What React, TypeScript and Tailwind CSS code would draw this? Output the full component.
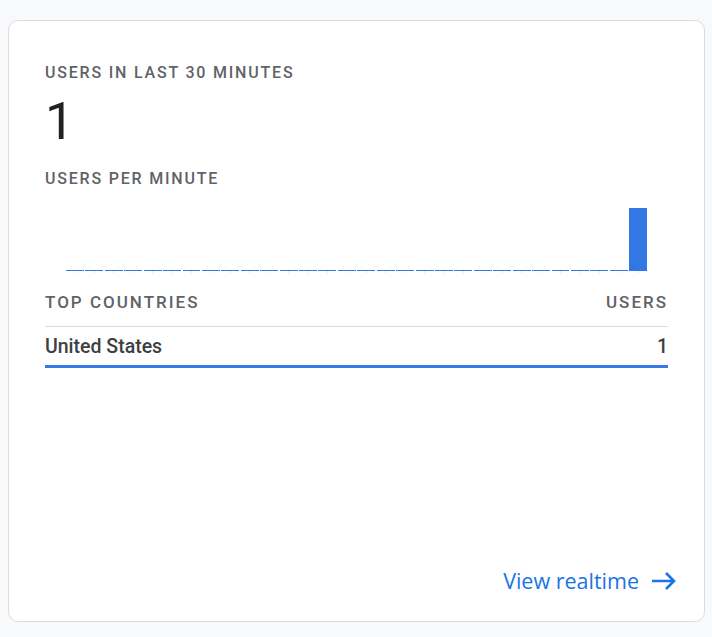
import React from 'react';

// 30 one-minute buckets, only the latest has a user
const PER_MINUTE: number[] = Array.from({ length: 30 }, (_, i) => (i === 29 ? 1 : 0));

const COUNTRIES = [{ name: 'United States', users: 1 }];

function ArrowIcon() {
  return (
    <svg width="26" height="20" viewBox="0 0 26 20" fill="none" className="block">
      <path d="M1 10h22M15 2l8 8-8 8" stroke="#1a73e8" strokeWidth="2.6" strokeLinecap="butt" strokeLinejoin="miter" />
    </svg>
  );
}

export default function App() {
  const max = Math.max(...PER_MINUTE, 1);

  return (
    <div className="min-h-[637px] bg-[#f8f9fa] pt-5 pb-[15px] pl-2 pr-[7px] font-['Roboto',sans-serif]">
      <div className="flex h-[602px] flex-col rounded-[10px] border border-[#dadce0] bg-white px-9 pt-10">
        {/* Headline number */}
        <div className="text-[16px] font-medium leading-6 tracking-[1.8px] text-[#5f6368]">USERS IN LAST 30 MINUTES</div>
        <div className="mt-[11px] text-[52px] leading-none text-[#202124]">1</div>

        {/* Per minute chart */}
        <div className="mt-[19px] text-[16px] font-medium leading-6 tracking-[1.8px] text-[#5f6368]">USERS PER MINUTE</div>
        <div className="flex h-[80px] items-end gap-[1.5px] px-[21px]">
          {PER_MINUTE.map((v, i) => (
            <div
              key={i}
              className="flex-1 bg-[#3277e3]"
              style={{ height: v > 0 ? `${(v / max) * 63}px` : '1px' }}
            />
          ))}
        </div>
        <div className="flex h-[3px] gap-[1.5px] px-[21px]">
          {PER_MINUTE.map((_, i) => (
            <div key={i} className="flex flex-1 justify-center">
              <div className="h-[2px] w-px bg-[#e3e5e8]" />
            </div>
          ))}
        </div>

        {/* Top countries table */}
        <div className="mt-[16px] flex justify-between border-b border-[#dadce0] pb-3 text-[17px] font-medium leading-6 tracking-[2px] text-[#5f6368]">
          <span>TOP COUNTRIES</span>
          <span>USERS</span>
        </div>
        {COUNTRIES.map(c => (
          <div key={c.name} className="mt-[8px] border-b-[3px] border-[#3b78e7] pb-[6px]">
            <div className="flex justify-between text-[19.5px] font-medium leading-6 text-[#3c4043]">
              <span>{c.name}</span>
              <span>{c.users}</span>
            </div>
          </div>
        ))}

        {/* Footer link */}
        <div className="-mr-[9px] mt-auto flex justify-end pb-[26px]">
          <a href="#" className="flex items-center gap-[12px] font-['Open_Sans',sans-serif] text-[21.5px] leading-7 text-[#1a73e8]">
            <span>View realtime</span>
            <ArrowIcon />
          </a>
        </div>
      </div>
    </div>
  );
}
